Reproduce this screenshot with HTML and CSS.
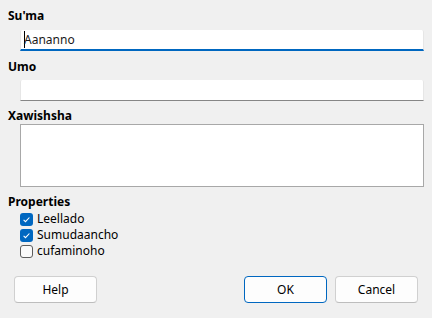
FILE: index.html
```html
<!DOCTYPE html>
<html lang="en">
<head>
<meta charset="utf-8">
<title>Properties</title>
<link rel="stylesheet" href="styles.css">
</head>
<body>
<div class="dialog">
  <div class="label l1">Su'ma</div>
  <div class="field focused"><span class="caret"></span>Aananno</div>
  <div class="label l2">Umo</div>
  <div class="field"></div>
  <div class="label l3">Xawishsha</div>
  <div class="area"></div>
  <div class="label l4">Properties</div>
  <div class="checks">
    <div class="check"><span class="box on"><svg width="13" height="13" viewBox="0 0 13 13"><path d="M3.6 6.9 L5.5 8.7 L9.4 4.5" fill="none" stroke="#fff" stroke-width="1.1"/></svg></span>Leellado</div>
    <div class="check"><span class="box on"><svg width="13" height="13" viewBox="0 0 13 13"><path d="M3.6 6.9 L5.5 8.7 L9.4 4.5" fill="none" stroke="#fff" stroke-width="1.1"/></svg></span>Sumudaancho</div>
    <div class="check"><span class="box"></span>cufaminoho</div>
  </div>
  <div class="buttons">
    <div class="btn">Help</div>
    <div class="spacer"></div>
    <div class="btn primary">OK</div>
    <div class="btn">Cancel</div>
  </div>
</div>
</body>
</html>
```
FILE: styles.css
```css
html, body {
  margin: 0;
  padding: 0;
  background: #f0f0f0;
}
body {
  width: 432px;
  height: 318px;
  overflow: hidden;
  font-family: "Noto Sans", "Open Sans", sans-serif;
  font-size: 12px;
  color: #1a1a1a;
}
.dialog {
  padding: 8px 8px 0 8px;
  display: flex;
  flex-direction: column;
}
.label {
  font-weight: bold;
  line-height: 16px;
  height: 16px;
  color: #000;
}
.l2 { margin-top: 8px; }
.l3 { margin-top: 7px; }
.l4 { margin-top: 7px; }
.field {
  margin-left: 12px;
  height: 20px;
  background: #fff;
  border: 1px solid #e6e6e6;
  border-bottom: 1px solid #868686;
  border-top: none;
  box-sizing: border-box;
  height: 21px;
  line-height: 20px;
  padding-left: 3px;
  border-radius: 2px 2px 0 0;
  display: flex;
  align-items: center;
}
.l1 + .field { margin-top: 6px; }
.l2 + .field { margin-top: 5px; }
.field.focused {
  border-bottom: 2px solid #0067c0;
}
.caret {
  display: inline-block;
  width: 1px;
  height: 17px;
  background: #000;
  margin-right: -1px;
}
.area {
  margin-left: 12px;
  height: 63px;
  background: #fff;
  border: 1px solid #a8a8a8;
  box-sizing: border-box;
}
.checks {
  margin-top: 1px;
  margin-left: 12px;
  display: flex;
  flex-direction: column;
}
.check {
  height: 16px;
  line-height: 16px;
  display: flex;
  align-items: center;
  gap: 4px;
  color: #000;
}
.box {
  width: 13px;
  height: 13px;
  box-sizing: border-box;
  border: 1px solid #5c5c5c;
  border-radius: 3px;
  background: #f9f9f9;
  display: flex;
}
.box.on {
  border: none;
  background: #0067c0;
}
.box svg { display: block; }
.buttons {
  margin-top: 17px;
  display: flex;
  gap: 8px;
  padding: 0 6px;
}
.spacer { flex: 1; }
.btn {
  width: 83px;
  height: 27px;
  box-sizing: border-box;
  border: 1px solid #d0d0d0;
  border-bottom-color: #bdbdbd;
  border-radius: 4px;
  background: #fdfdfd;
  display: flex;
  align-items: center;
  justify-content: center;
  color: #000;
}
.btn.primary {
  border: 1px solid #0067c0;
}
```
